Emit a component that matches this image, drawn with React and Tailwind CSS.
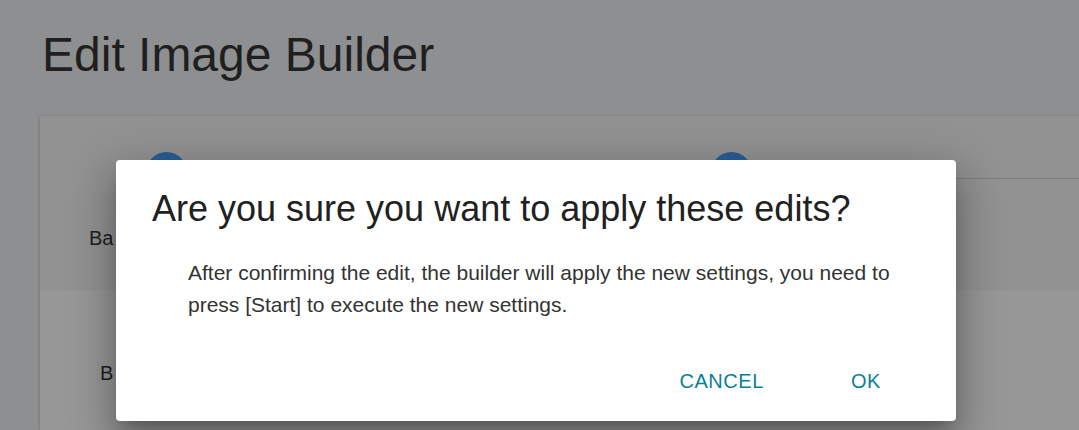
import React from 'react';

const App = () => {
    return (
        <div className="relative w-full h-[430px] overflow-hidden bg-[#8e8f91] font-['Liberation_Sans',Arial,sans-serif]">
            <h1 className="pl-[42px] pt-[31px] text-[48px] leading-[48px] text-[#1f1f20]">Edit Image Builder</h1>

            <div className="ml-[40px] mt-[37px] bg-[#929293] shadow-[-1px_0_2px_rgba(0,0,0,0.12)]">
                <div className="h-[174px]">
                    <div className="flex pt-[36px]">
                        <div className="ml-[106px] w-[41px] h-[41px] rounded-full bg-[#2a5d94]" />
                        <div className="ml-[524px] w-[41px] h-[41px] rounded-full bg-[#2a5d94]" />
                        <div className="flex-1 ml-[6px] mt-[26px] h-px bg-[#7d7d7e]" />
                    </div>
                    <p className="pl-[49px] pt-[33px] text-[20px] leading-[24px] text-[#1e1e1e]">Ba</p>
                </div>
                <div className="h-[140px] bg-[#979797] pt-[71px]">
                    <p className="pl-[60px] text-[20px] leading-[24px] text-[#1e1e1e]">B</p>
                </div>
            </div>

            <div className="absolute left-[116px] top-[160px] w-[840px] h-[261px] bg-white rounded-[4px] flex flex-col shadow-[0_11px_15px_-7px_rgba(0,0,0,0.25),0_24px_38px_3px_rgba(0,0,0,0.18),0_9px_46px_8px_rgba(0,0,0,0.15)]">
                <h2 className="pl-[36px] pt-[27px] text-[36px] leading-[44px] text-[#212121]">Are you sure you want to apply these edits?</h2>
                <p className="pl-[72px] pr-[40px] pt-[26px] text-[21px] leading-[32px] text-[#333333]">
                    After confirming the edit, the builder will apply the new settings, you need to press [Start] to execute the new settings.
                </p>
                <div className="mt-auto flex justify-end gap-[55px] pr-[59px] pb-[20px]">
                    <button className="px-4 py-2 text-[20px] leading-[24px] tracking-[0.57px] text-[#0b7f99] uppercase">Cancel</button>
                    <button className="px-4 py-2 text-[20px] leading-[24px] tracking-[0.57px] text-[#0b7f99] uppercase">OK</button>
                </div>
            </div>
        </div>
    );
};

export default App;
